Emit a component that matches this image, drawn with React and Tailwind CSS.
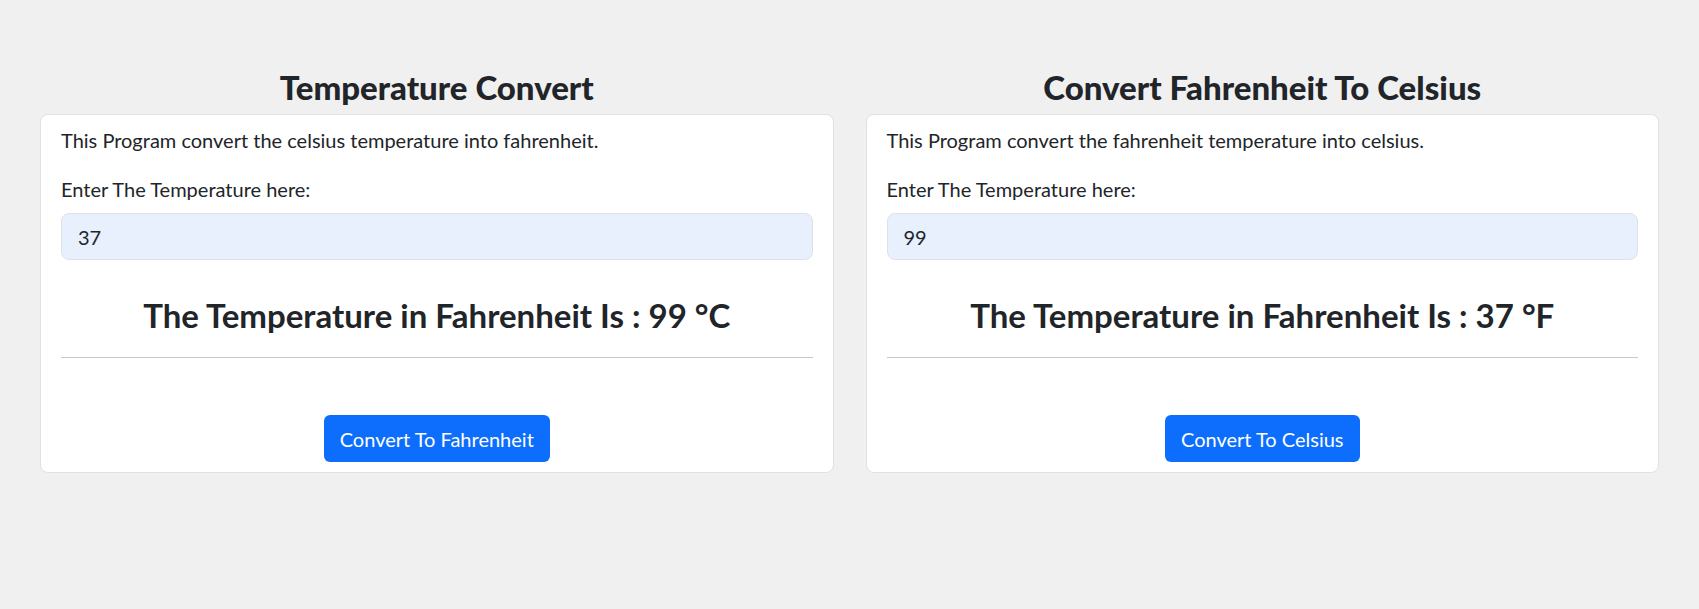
import { useState } from 'react';

const Converter = ({ title, description, initial, result, button }) => {
    const [value, setValue] = useState(initial);

    return (
        <div>
            <h2 className="text-center text-[33px] leading-[38px] font-black text-[#212529] mb-2">
                {title}
            </h2>
            <div className="bg-white border border-[#dee2e6] rounded-lg px-5 pt-[10px] pb-[10px]">
                <p className="text-[20px] leading-[30px] mb-[19px]">{description}</p>
                <label className="block text-[20px] leading-[30px] mb-[9px]">Enter The Temperature here:</label>
                <input
                    type="text"
                    value={value}
                    onChange={(e) => setValue(e.target.value)}
                    className="w-full h-[47px] px-4 text-[20px] bg-[#e8f0fe] border border-[#dee2e6] rounded-lg outline-none text-[#212529]"
                />
                <h3 className="text-center text-[33px] leading-[38px] font-bold mt-[36px] mb-[23px]">
                    {result}
                </h3>
                <hr className="border-0 border-t border-[#c8c8c8] mb-[57px]" />
                <div className="flex justify-center">
                    <button
                        type="button"
                        className="bg-[#0d6efd] text-white text-[20px] leading-[30px] h-[47px] px-4 rounded-md"
                    >
                        {button}
                    </button>
                </div>
            </div>
        </div>
    );
};

const App = () => {
    return (
        <div className="min-h-screen bg-[#f0f0f0] font-['Lato',sans-serif] text-[#212529]">
            <div className="grid grid-cols-2 gap-8 px-10 pt-[68px]">
                <Converter
                    title="Temperature Convert"
                    description="This Program convert the celsius temperature into fahrenheit."
                    initial="37"
                    result="The Temperature in Fahrenheit Is : 99 °C"
                    button="Convert To Fahrenheit"
                />
                <Converter
                    title="Convert Fahrenheit To Celsius"
                    description="This Program convert the fahrenheit temperature into celsius."
                    initial="99"
                    result="The Temperature in Fahrenheit Is : 37 °F"
                    button="Convert To Celsius"
                />
            </div>
        </div>
    );
};

export default App;
